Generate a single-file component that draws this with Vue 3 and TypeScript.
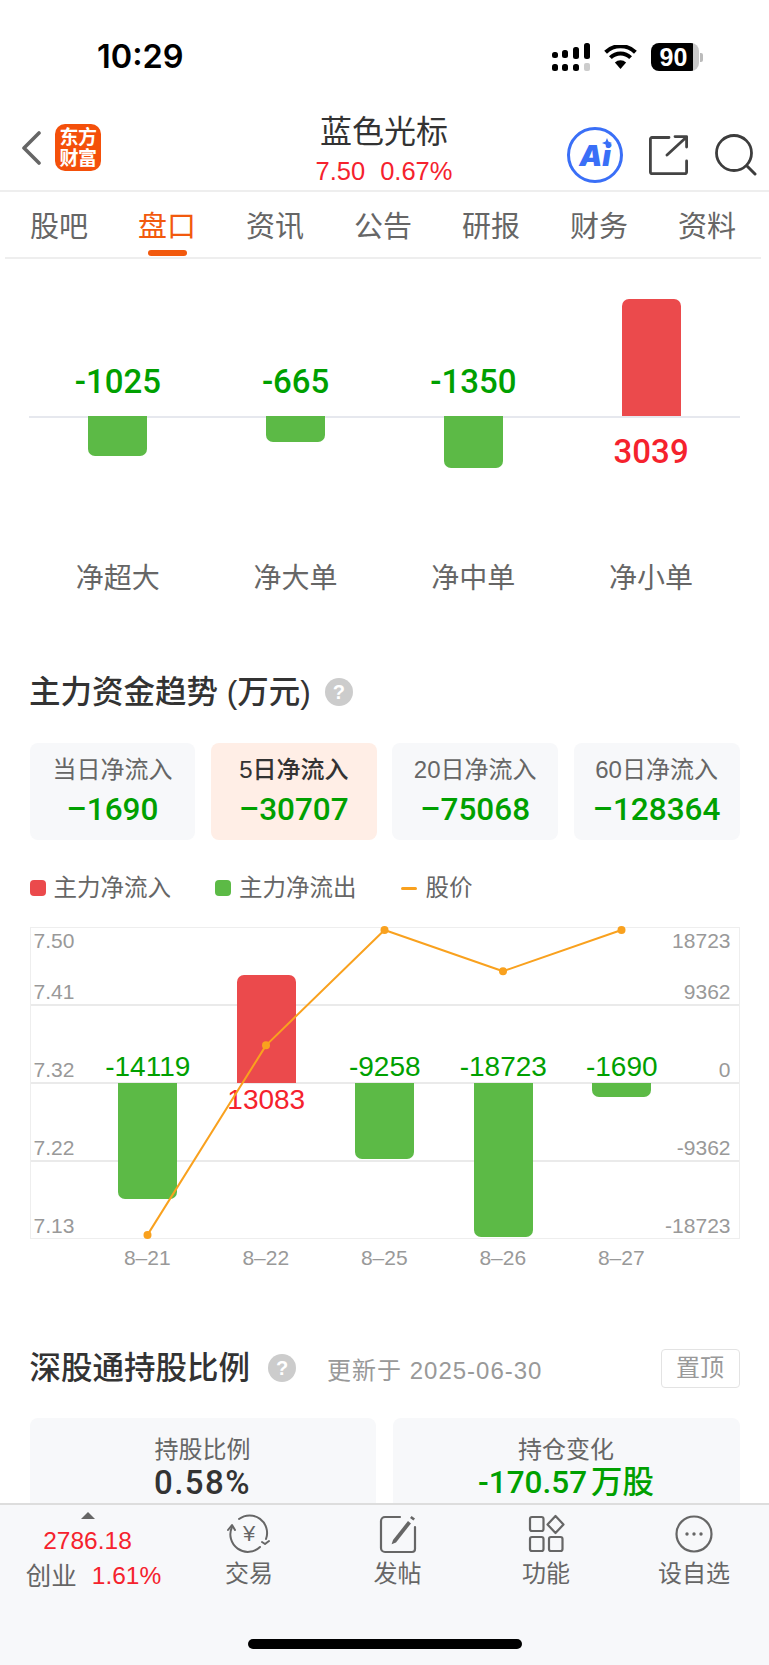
<script setup lang="ts">
interface FlowItem { name: string; value: number }
interface TrendItem { date: string; value: number; price: number }

const tabs = ['股吧', '盘口', '资讯', '公告', '研报', '财务', '资料']
const flows: FlowItem[] = [
  { name: '净超大', value: -1025 },
  { name: '净大单', value: -665 },
  { name: '净中单', value: -1350 },
  { name: '净小单', value: 3039 },
]
const summary = [
  { label: '当日净流入', value: '–1690', active: false },
  { label: '5日净流入', value: '–30707', active: true },
  { label: '20日净流入', value: '–75068', active: false },
  { label: '60日净流入', value: '–128364', active: false },
]
const trend: TrendItem[] = [
  { date: '8–21', value: -14119, price: 7.13 },
  { date: '8–22', value: 13083, price: 7.36 },
  { date: '8–25', value: -9258, price: 7.5 },
  { date: '8–26', value: -18723, price: 7.45 },
  { date: '8–27', value: -1690, price: 7.5 },
]
const bands = [
  [['7.41', '9362']],
  [['7.32', '0']],
  [['7.22', '-9362']],
  [['7.13', '-18723']],
]

const flowBar = (v: number) => ({ height: `${Math.abs(v) * 0.0387}px` })
const trendBar = (v: number) => ({ height: `${Math.abs(v) * 0.00823}px` })

// Price line in plot coordinates: five evenly spaced columns after the left axis gutter.
const points = trend.map((t, i) => ({
  x: 117.5 + i * 118.5,
  y: 3 + (7.5 - t.price) * 824,
}))
const linePoints = points.map((p) => `${p.x},${p.y}`).join(' ')
</script>

<template>
  <div class="phone">
    <div class="status">
      <span class="clock">10:29</span>
      <div class="status-icons">
        <svg width="38" height="28" viewBox="0 0 38 28">
          <g fill="#000">
            <rect x="0" y="9" width="6" height="6" rx="2.5" />
            <rect x="0" y="21" width="6" height="7" rx="2.5" />
            <rect x="10" y="7" width="6" height="8" rx="2.5" />
            <rect x="10" y="21" width="6" height="7" rx="2.5" />
            <rect x="21" y="4" width="6" height="12" rx="2.5" />
            <rect x="21" y="21" width="6" height="7" rx="2.5" />
            <rect x="32" y="0" width="6" height="16" rx="2.5" />
          </g>
          <rect x="32" y="20" width="6" height="8" rx="2" fill="#ccc" />
        </svg>
        <svg width="33" height="24" viewBox="0 0 33 24">
          <path d="M16.5 24l-5.6-6.4a8 8 0 0 1 11.2 0z" fill="#000" />
          <path d="M6.4 12.6a14.4 14.4 0 0 1 20.2 0" fill="none" stroke="#000" stroke-width="4" />
          <path d="M1.6 7.2a21.4 21.4 0 0 1 29.8 0" fill="none" stroke="#000" stroke-width="4" />
        </svg>
        <div class="battery">
          <div class="battery-body"><span>90</span></div>
          <i class="battery-nub"></i>
        </div>
      </div>
    </div>

    <header class="nav">
      <div class="nav-left">
        <svg class="back" width="20" height="34" viewBox="0 0 20 34">
          <path d="M18 2L3 17l15 15" fill="none" stroke="#666" stroke-width="3.6" stroke-linecap="round" stroke-linejoin="round" />
        </svg>
        <div class="logo"><span>东方</span><span>财富</span></div>
      </div>
      <div class="nav-title">
        <div class="name">蓝色光标</div>
        <div class="quote"><span>7.50</span><span>0.67%</span></div>
      </div>
      <div class="nav-right">
        <div class="ai">
          <span>Ai</span>
          <svg class="ai-star" width="10" height="10" viewBox="0 0 10 10">
            <path d="M5 0l1.4 3.6L10 5 6.4 6.4 5 10 3.6 6.4 0 5l3.6-1.4z" fill="#3a6ff7" />
          </svg>
        </div>
        <svg width="40" height="40" viewBox="0 0 40 40">
          <path d="M20 2.5H3a1.6 1.6 0 0 0-1.6 1.6v33a1.6 1.6 0 0 0 1.6 1.6h33a1.6 1.6 0 0 0 1.6-1.6V26M18 20L37 2.5M26 1.6h11.6V12" fill="none" stroke="#444" stroke-width="2.8" stroke-linecap="round" stroke-linejoin="round" />
        </svg>
        <svg width="42" height="42" viewBox="0 0 42 42">
          <circle cx="19" cy="19" r="17.5" fill="none" stroke="#3d3d3d" stroke-width="2.8" />
          <path d="M32 32l8 8" fill="none" stroke="#3d3d3d" stroke-width="3" stroke-linecap="round" />
        </svg>
      </div>
    </header>

    <nav class="tabs">
      <div v-for="t in tabs" :key="t" class="tab" :class="{ on: t === '盘口' }">{{ t }}</div>
    </nav>

    <main class="content">
      <section class="flow">
        <div v-for="f in flows" :key="f.name" class="flow-col">
          <div class="flow-up">
            <span v-if="f.value < 0" class="flow-num down">{{ f.value }}</span>
            <div v-else class="bar bar-red" :style="flowBar(f.value)"></div>
          </div>
          <div class="flow-down">
            <div v-if="f.value < 0" class="bar bar-green" :style="flowBar(f.value)"></div>
            <span v-else class="flow-num up">{{ f.value }}</span>
          </div>
          <div class="flow-name">{{ f.name }}</div>
        </div>
      </section>

      <h2 class="title trend-title">
        主力资金趋势 (万元)
        <i class="help">?</i>
      </h2>

      <div class="summary">
        <div v-for="s in summary" :key="s.label" class="sum-card" :class="{ active: s.active }">
          <div class="sum-label">{{ s.label }}</div>
          <div class="sum-value">{{ s.value }}</div>
        </div>
      </div>

      <div class="legend">
        <span class="lg"><i class="swatch red"></i>主力净流入</span>
        <span class="lg"><i class="swatch green"></i>主力净流出</span>
        <span class="lg"><i class="dash"></i>股价</span>
      </div>

      <div class="plot">
        <div class="plot-bands">
          <div v-for="(b, i) in bands" :key="i" class="band">
            <div v-if="i === 0" class="axis-row axis-top"><span>7.50</span><span>18723</span></div>
            <div v-for="r in b" :key="r[0]" class="axis-row"><span>{{ r[0] }}</span><span>{{ r[1] }}</span></div>
          </div>
        </div>
        <div class="plot-cols">
          <div v-for="t in trend" :key="t.date" class="plot-col">
            <div class="plot-up">
              <span v-if="t.value < 0" class="plot-num down">{{ t.value }}</span>
              <div v-else class="bar bar-red" :style="trendBar(t.value)"></div>
            </div>
            <div class="plot-down">
              <div v-if="t.value < 0" class="bar bar-green" :style="trendBar(t.value)"></div>
              <span v-else class="plot-num up">{{ t.value }}</span>
            </div>
          </div>
        </div>
        <svg class="plot-line" width="710" height="312" viewBox="0 0 710 312">
          <polyline :points="linePoints" fill="none" stroke="#f9a11e" stroke-width="2" stroke-linejoin="round" />
          <circle v-for="p in points" :key="p.x" :cx="p.x" :cy="p.y" r="4" fill="#f9a11e" />
        </svg>
      </div>
      <div class="dates">
        <span v-for="t in trend" :key="t.date">{{ t.date }}</span>
      </div>

      <div class="hold-head">
        <h2 class="title">深股通持股比例</h2>
        <i class="help">?</i>
        <span class="updated">更新于 2025-06-30</span>
        <button class="pin">置顶</button>
      </div>
      <div class="hold">
        <div class="hold-card">
          <div class="hold-label">持股比例</div>
          <div class="hold-value">0.58%</div>
        </div>
        <div class="hold-card">
          <div class="hold-label">持仓变化</div>
          <div class="hold-value minus">-170.57 万股</div>
        </div>
      </div>
    </main>

    <footer class="dock">
      <div class="dock-row">
        <div class="index">
          <i class="tri"></i>
          <div class="index-num">2786.18</div>
          <div class="index-line"><span class="index-name">创业</span><span class="index-pct">1.61%</span></div>
        </div>
        <div class="dock-item">
          <svg width="44" height="40" viewBox="0 0 44 40">
            <g fill="none" stroke="#666" stroke-width="2" stroke-linecap="round" stroke-linejoin="round">
              <path d="M12 5A17.5 17.5 0 0 1 39 25" />
              <path d="M33 33A17.5 17.5 0 0 1 5 13" />
              <path d="M1 16l4-5 3 5" />
              <path d="M42 27l-4 3-3-2" />
            </g>
            <text x="22" y="27" text-anchor="middle" class="yen">¥</text>
          </svg>
          <span>交易</span>
        </div>
        <div class="dock-item">
          <svg width="40" height="40" viewBox="0 0 40 40">
            <path d="M22 3H7a4 4 0 0 0-4 4v27a4 4 0 0 0 4 4h27a3 3 0 0 0 3-3V13" fill="none" stroke="#666" stroke-width="2.2" stroke-linecap="round" />
            <path d="M15 26l15-19 3 2.4-15 19-4.4 1.8z" fill="#666" />
            <path d="M32 4l1.6-2 3.4 2.6-1.6 2z" fill="#666" />
          </svg>
          <span>发帖</span>
        </div>
        <div class="dock-item">
          <svg width="38" height="40" viewBox="0 0 38 40">
            <g fill="none" stroke="#666" stroke-width="2.2" stroke-linejoin="round">
              <rect x="3" y="3" width="13.5" height="14" rx="2" />
              <rect x="3" y="23" width="13.5" height="14" rx="2" />
              <rect x="22" y="23" width="13.5" height="14" rx="2" />
              <path d="M28.5 2l8 8.5-8 8.5-8-8.5z" />
            </g>
          </svg>
          <span>功能</span>
        </div>
        <div class="dock-item">
          <svg width="40" height="40" viewBox="0 0 40 40">
            <circle cx="20" cy="20" r="17.5" fill="none" stroke="#666" stroke-width="2.2" />
            <circle cx="13" cy="20" r="1.7" fill="#666" />
            <circle cx="20" cy="20" r="1.7" fill="#666" />
            <circle cx="27" cy="20" r="1.7" fill="#666" />
          </svg>
          <span>设自选</span>
        </div>
      </div>
      <div class="home"></div>
    </footer>
  </div>
</template>

<style>
html, body { margin: 0; background: #fff; }
</style>

<style scoped>
.phone {
  width: 769px;
  height: 1665px;
  display: flex;
  flex-direction: column;
  overflow: hidden;
  background: #fff;
  color: #333;
  font-family: "Liberation Sans", "Noto Sans CJK SC", sans-serif;
}

/* status bar */
.status {
  height: 112px;
  flex: none;
  box-sizing: border-box;
  padding: 43px 66px 0 97px;
  display: flex;
  justify-content: space-between;
  align-items: flex-start;
}
.clock {
  font: 600 32.5px/28px Inter, "Liberation Sans", sans-serif;
  color: #000;
}
.status-icons { display: flex; align-items: center; gap: 14px; height: 28px; }
.battery { display: flex; align-items: center; gap: 1px; }
.battery-body {
  width: 48px;
  height: 28px;
  border-radius: 8px;
  background: linear-gradient(90deg, #000 0 42px, #c9c9c9 42px);
  display: flex;
  align-items: center;
  justify-content: center;
}
.battery-body span {
  font: 700 25px/28px "Liberation Sans", sans-serif;
  color: #fff;
  margin-right: 3px;
}
.battery-nub { width: 3px; height: 9px; background: #bbb; border-radius: 0 2px 2px 0; }

/* title bar */
.nav {
  height: 80px;
  flex: none;
  position: relative;
  box-sizing: border-box;
  padding: 12px 12px 0 21px;
  display: flex;
  justify-content: space-between;
  align-items: flex-start;
}
.nav::after {
  content: "";
  position: absolute;
  left: 0;
  right: 0;
  bottom: 0;
  height: 2px;
  background: #eee;
}
.nav-left { display: flex; align-items: center; gap: 14px; }
.logo {
  width: 46px;
  height: 47px;
  border-radius: 10px;
  background: #f4500a;
  color: #fff;
  font-size: 19px;
  line-height: 21px;
  font-weight: 700;
  display: flex;
  flex-direction: column;
  align-items: center;
  justify-content: center;
}
.logo span { letter-spacing: -0.5px; }
.nav-title {
  position: absolute;
  left: -1px;
  right: 0;
  top: 0;
  text-align: center;
  pointer-events: none;
}
.name { font-size: 32px; line-height: 40px; color: #333; }
.quote {
  display: flex;
  justify-content: center;
  gap: 15px;
  font-size: 25.5px;
  line-height: 28px;
  margin-top: 5px;
  color: #f5222d;
}
.nav-right { display: flex; align-items: center; gap: 26px; margin-top: 3px; }
.ai {
  width: 56px;
  height: 56px;
  box-sizing: border-box;
  border: 3px solid #3a6ff7;
  border-radius: 50%;
  position: relative;
  color: #3a6ff7;
  display: flex;
  align-items: center;
  justify-content: center;
  font: italic 900 29px/1 Inter, "Liberation Sans", sans-serif;
}
.ai-star { position: absolute; right: 8px; top: 8px; }

/* tabs */
.tabs {
  flex: none;
  height: 67px;
  box-sizing: border-box;
  margin: 0 8px 0 5px;
  padding-top: 17px;
  display: grid;
  grid-template-columns: repeat(7, 1fr);
  border-bottom: 2px solid #eee;
}
.tab {
  position: relative;
  text-align: center;
  font-size: 29px;
  line-height: 36px;
  color: #666;
}
.tab.on { color: #f2590d; }
.tab.on::after {
  content: "";
  position: absolute;
  left: 50%;
  top: 41px;
  width: 39px;
  height: 6px;
  margin-left: -19.5px;
  border-radius: 3px;
  background: #f2590d;
}

/* content */
.content { flex: 1; min-height: 0; overflow: hidden; padding: 0 29px; box-sizing: border-box; }

.flow { display: grid; grid-template-columns: repeat(4, 1fr); padding-top: 40px; }
.flow-col {
  display: flex;
  flex-direction: column;
  align-items: stretch;
  text-align: center;
}
.flow-up {
  height: 117px;
  display: flex;
  flex-direction: column;
  justify-content: flex-end;
  align-items: center;
  border-bottom: 2px solid #e6e8ee;
}
.flow-down { height: 120px; margin-top: -2px; display: flex; flex-direction: column; align-items: center; }
.flow-num { font: 500 33px/40px Roboto, "Liberation Sans", sans-serif; }
.flow-up .flow-num { margin-bottom: 14px; }
.flow-down .flow-num { margin-top: 16px; }
.down { color: #00a000; }
.up { color: #f5222d; }
.bar { width: 59px; }
.bar-red { background: #eb4a4c; border-radius: 7px 7px 0 0; }
.bar-green { background: #5cba46; border-radius: 0 0 7px 7px; }
.flow-name { font-size: 28px; line-height: 36px; color: #666; margin-top: 25px; }

.title {
  margin: 0;
  font-size: 31.5px;
  font-weight: 500;
  line-height: 40px;
  color: #333;
}
.trend-title { display: flex; align-items: center; gap: 14px; margin-top: 75px; }
.help {
  width: 28px;
  height: 28px;
  flex: none;
  border-radius: 50%;
  background: #ccc;
  color: #fff;
  font: 700 20px/28px "Liberation Sans", sans-serif;
  text-align: center;
}

.summary {
  display: grid;
  grid-template-columns: repeat(4, 1fr);
  gap: 15.5px;
  margin: 31px 0 0 0.5px;
  width: 710px;
}
.sum-card {
  height: 97px;
  border-radius: 8px;
  background: #f7f8fa;
  text-align: center;
  color: #666;
}
.sum-card.active { background: #ffeee6; color: #333; }
.sum-label { font-size: 24px; line-height: 30px; margin-top: 12px; }
.active .sum-label { font-weight: 500; }
.sum-value {
  font: 500 31.5px/40px Roboto, "Liberation Sans", sans-serif;
  color: #00a000;
  margin-top: 5px;
}

.legend {
  display: flex;
  align-items: center;
  margin: 32px 0 0 0.5px;
  font-size: 23.5px;
  line-height: 32px;
  color: #666;
}
.lg { display: flex; align-items: center; margin-right: 44px; }
.swatch { width: 16px; height: 16px; border-radius: 4px; margin-right: 8px; }
.swatch.red { background: #eb4a4c; }
.swatch.green { background: #5cba46; }
.dash { width: 16px; height: 3px; border-radius: 2px; background: #f9a11e; margin-right: 9px; }

.plot {
  position: relative;
  width: 710px;
  height: 312px;
  box-sizing: border-box;
  margin: 23px 0 0 0.5px;
  border: 1px solid #eee;
}
.plot-bands {
  position: absolute;
  inset: 0;
  display: flex;
  flex-direction: column;
}
.band {
  flex: 1;
  display: flex;
  flex-direction: column;
  justify-content: flex-end;
  border-bottom: 2px solid #eaeaea;
  padding: 0 8px 0 3px;
  font-size: 21px;
  line-height: 24px;
  color: #999;
}
.band:last-child { border-bottom: 0; }
.axis-row { display: flex; justify-content: space-between; }
.axis-top { margin-bottom: auto; padding-top: 1px; }
.plot-cols {
  position: absolute;
  inset: 0 0 0 58px;
  display: flex;
}
.plot-col { width: 118.5px; display: flex; flex-direction: column; align-items: center; }
.plot-up {
  height: 155px;
  display: flex;
  flex-direction: column;
  justify-content: flex-end;
  align-items: center;
}
.plot-down { display: flex; flex-direction: column; align-items: center; }
.plot-num { font-size: 28px; line-height: 32px; position: relative; }
.plot-down .plot-num { margin-top: 1px; }
.plot-line { position: absolute; left: -1px; top: -1px; overflow: visible; }

.dates {
  display: flex;
  margin: 7px 0 0 59px;
  font-size: 21px;
  line-height: 24px;
  color: #999;
}
.dates span { width: 118.5px; text-align: center; }

.hold-head {
  display: flex;
  align-items: center;
  margin: 78px 0 0 0.5px;
  width: 710px;
}
.hold-head .help { margin-left: 18px; }
.updated { margin-left: 31px; font-size: 24px; letter-spacing: 1px; color: #999; flex: 1; }
.pin {
  width: 79px;
  height: 39px;
  padding: 0;
  box-sizing: border-box;
  border: 1.5px solid #e3e3e3;
  border-radius: 4px;
  background: #fff;
  font: 24px/36px "Liberation Sans", "Noto Sans CJK SC", sans-serif;
  color: #999;
}
.hold {
  display: grid;
  grid-template-columns: 346px 347px;
  column-gap: 17px;
  margin: 30px 0 0 0.5px;
}
.hold-card {
  height: 120px;
  border-radius: 8px;
  background: #f7f8fa;
  text-align: center;
}
.hold-label { font-size: 24px; line-height: 32px; color: #666; padding-top: 16px; }
.hold-value {
  font-family: Roboto, "Noto Sans CJK SC", sans-serif;
  font-size: 33px;
  letter-spacing: 1.5px;
  line-height: 38px;
  font-weight: 500;
  color: #333;
  margin-top: -2px;
}
.hold-value.minus { color: #00a000; font-size: 31.5px; letter-spacing: 0; word-spacing: -4px; }

/* bottom dock */
.dock {
  flex: none;
  height: 162px;
  box-sizing: border-box;
  border-top: 2px solid #ddd;
  background: #f7f8fa;
  position: relative;
}
.dock-row { display: grid; grid-template-columns: 175px 148px 149px 148px 148px; }
.index { display: flex; flex-direction: column; align-items: center; padding-top: 7px; }
.tri {
  width: 0;
  height: 0;
  border-left: 7px solid transparent;
  border-right: 7px solid transparent;
  border-bottom: 7px solid #666;
}
.index-num { font-size: 24.5px; line-height: 28px; color: #f5222d; margin-top: 8px; }
.index-line { display: flex; align-items: center; gap: 15px; margin: 3px 0 0 12px; line-height: 36px; }
.index-name { font-size: 25.5px; color: #666; }
.index-pct { font-size: 24.5px; color: #f5222d; }
.dock-item {
  display: flex;
  flex-direction: column;
  align-items: center;
  padding-top: 9px;
  font-size: 24px;
  line-height: 36px;
  color: #666;
}
.dock-item span { margin-top: 2px; }
.yen { font: 22px "Liberation Sans", sans-serif; fill: #666; }
.home {
  position: absolute;
  left: 248px;
  top: 134px;
  width: 274px;
  height: 10px;
  border-radius: 5px;
  background: #000;
}
</style>
